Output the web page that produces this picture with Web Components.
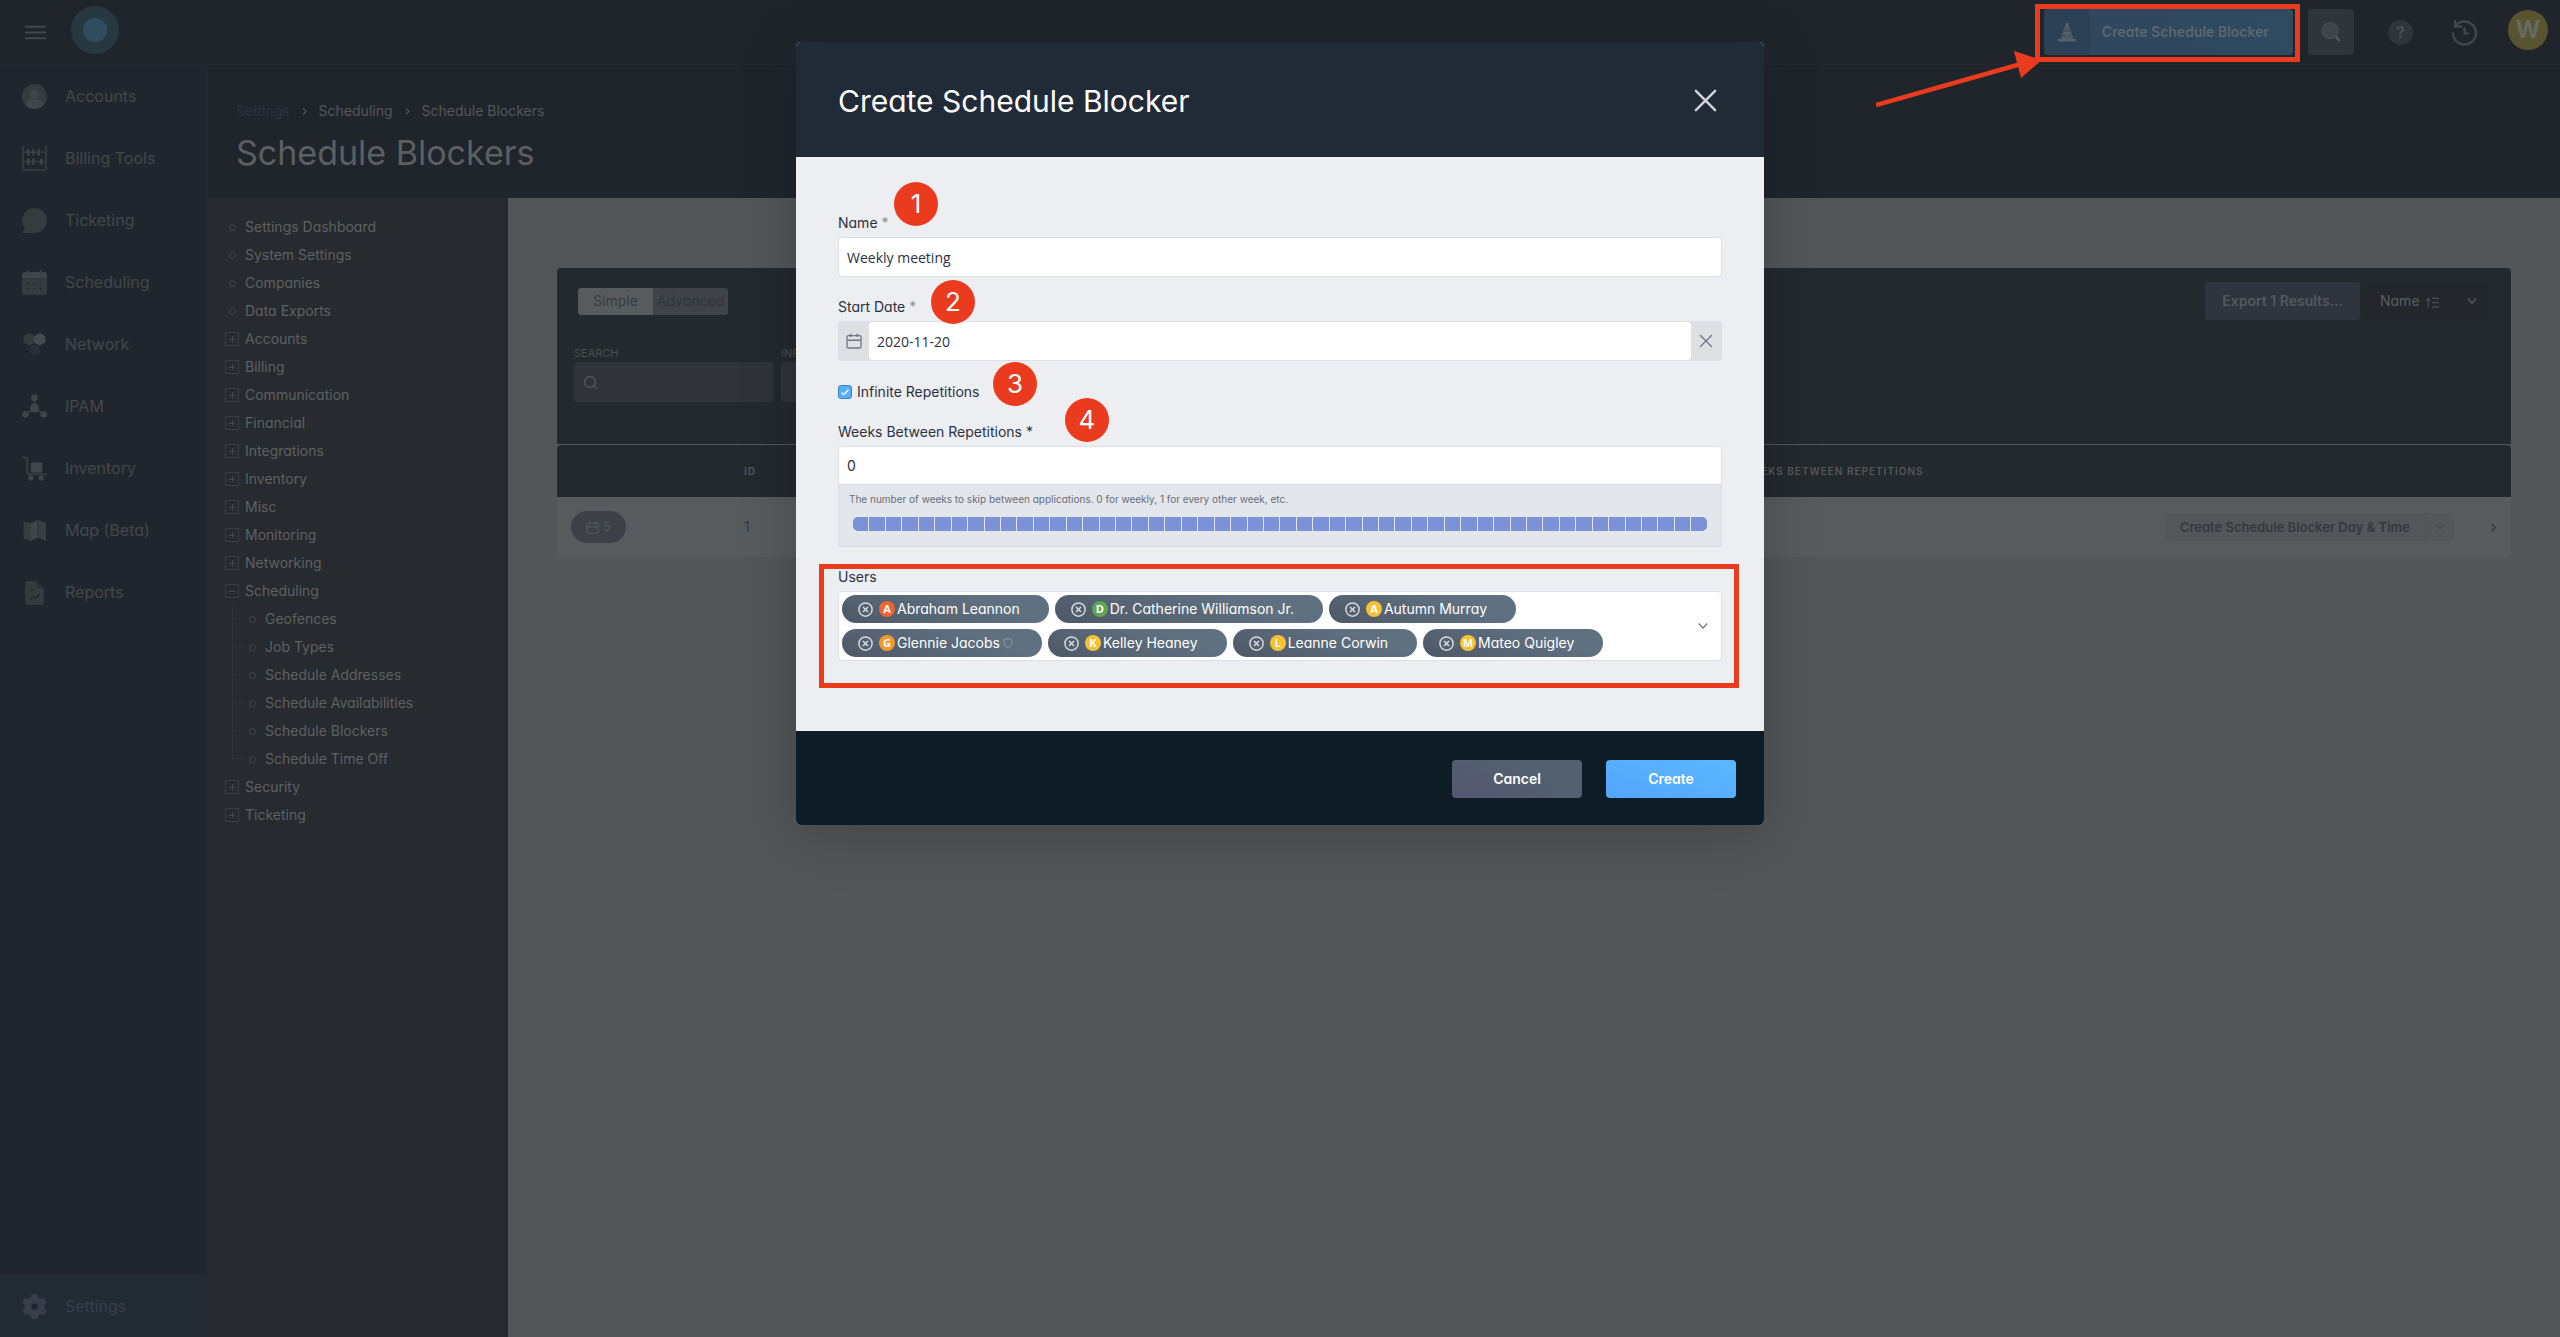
<!DOCTYPE html>
<html lang="en">
<head>
<meta charset="utf-8">
<title>Schedule Blockers</title>
<style>
  :root {
    --bar: #20252c;
    --side: #21262e;
    --tree: #272a2e;
    --page: #525659;
    --panel: #24292d;
    --row: #575b5e;
    --line: #25292f;
    --red: #eb3b1e;
    --ink: #2b3140;
    --field-border: #dcdfe5;
  }
  body {
    margin: 0;
    background: var(--page);
    font-family: Inter, "Liberation Sans", sans-serif;
    font-size: 14px;
    line-height: 20px;
    font-feature-settings: "cv11" 1;
  }
</style>
</head>
<body>
<app-shell>
  <top-bar slot="top"></top-bar>
  <side-nav slot="side"></side-nav>
  <page-header slot="header"></page-header>
  <settings-tree slot="tree"></settings-tree>
  <blocker-table slot="content"></blocker-table>
</app-shell>
<modal-dialog heading="Create Schedule Blocker">
  <blocker-form></blocker-form>
</modal-dialog>
<call-out></call-out>

<script>
const ICONS = {
  menu: '<path d="M1 6h22M1 12h22M1 18h22" stroke="currentColor" stroke-width="2.2"/>',
  accounts: '<circle cx="12" cy="12" r="12" fill="#363b3f"/><circle cx="12" cy="10" r="4.6" fill="#41464c"/><path d="M3 20c2-7 16-7 18 0-4 5.300-14 5.300-18 0z" fill="#41464c"/>',
  billing: '<path d="M1 0v21a2 2 0 0 0 2 2h18a2 2 0 0 0 2-2V0" fill="none" stroke="#34393f" stroke-width="2"/><path d="M1 6h22M1 15h22" stroke="#34393f" stroke-width="1.600"/><path d="M6 3v6M11 3v6M16 3v6M6 12v6M11 12v6M18.500 12v6" stroke="#3e4349" stroke-width="2.400"/>',
  ticketing: '<path d="M12 0a12 12 0 0 1 0 24H1c-1 0-1-1 0-1.600 1.500-1 2-2 1.600-3A12 12 0 0 1 12 0z" fill="#363b3f"/>',
  scheduling: '<path d="M0 8h24v13a3 3 0 0 1-3 3H3a3 3 0 0 1-3-3z" fill="#363b3f"/><path d="M3 2h18a3 3 0 0 1 3 3v3H0V5a3 3 0 0 1 3-3z" fill="#41464c"/><path d="M6 0v5M18 0v5" stroke="#3b4046" stroke-width="2"/><path d="M5 13h2m4 0h2m4 0h2M5 18h2m4 0h2m4 0h2" stroke="#262b30" stroke-width="1.500"/>',
  network: '<path d="M7 1l5.500 3v6L7 13l-5.500-3V4z" fill="#363b3f"/><path d="M17 1l5.500 3v6L17 13l-5.500-3V4z" fill="#464b51"/><path d="M12 11.500l5 2.800v5.800l-5 2.900-5-2.900v-5.800z" fill="#282d36"/>',
  ipam: '<path d="M12 3v10M12 14L3 19.500M12 14l9 5.500" stroke="#363b41" stroke-width="1.800"/><g fill="#40454b"><circle cx="12" cy="3.600" r="3.200"/><circle cx="12" cy="13.500" r="4.300"/><circle cx="3.300" cy="19.500" r="3.200"/><circle cx="20.700" cy="19.500" r="3.200"/></g>',
  inventory: '<path d="M0 1.500h3q2 0 2 2V15q0 2.500 2.500 2.500H24" fill="none" stroke="#363b40" stroke-width="2"/><rect x="8.500" y="6" width="11" height="10" rx="2" fill="#41464c"/><circle cx="8.500" cy="21" r="2.500" fill="#40454b"/><circle cx="18.500" cy="21" r="2.500" fill="#40454b"/>',
  map: '<path d="M1.500 3L8 5v17l-6.500-2z" fill="#363b3f"/><path d="M8 5l7-3v17l-7 3z" fill="#40454b"/><path d="M15.500 2L23 4.500V22l-7.500-3z" fill="#3a3f44"/>',
  reports: '<path d="M6 1h8l7 7v13a3 3 0 0 1-3 3H6a3 3 0 0 1-3-3V4a3 3 0 0 1 3-3z" fill="#363b3f"/><path d="M14 1l7 7h-5a2 2 0 0 1-2-2z" fill="#2a2f34"/><path d="M8 9.500h3M8 19l3-3 2 1.500 4-4" fill="none" stroke="#282d32" stroke-width="2"/>',
  gear: '<path d="M9.500 0h5l1 3 2.500 1.500 3.300-.6 2.400 4.200-2.200 2.500v2.800l2.200 2.500-2.400 4.200-3.300-.6-2.500 1.500-1 3h-5l-1-3L6 19.500l-3.300.6-2.400-4.200 2.200-2.500v-2.800L.3 8.100l2.400-4.200 3.300.6L8.500 3z" fill="#373d4b"/><circle cx="12" cy="12" r="4" fill="#303a4a"/><circle cx="12" cy="12" r="2.600" fill="#1d262c"/>',
  right: '<path d="M8 4l8 8-8 8" fill="none" stroke="currentColor" stroke-width="3"/>',
  down: '<path d="M2 6l10 11 10-11" fill="none" stroke="currentColor" stroke-width="3"/>',
  search: '<circle cx="11" cy="11" r="10" fill="none" stroke="currentColor" stroke-width="2.600"/><path d="M18 18l5 5" stroke="currentColor" stroke-width="2.600"/>',
  lens: '<circle cx="11" cy="10.500" r="9.500" fill="#40454a" stroke="#4a4e52" stroke-width="1.500"/><path d="M18 17.500l4.500 5.500" stroke="#5b5f63" stroke-width="2.400"/>',
  cone: '<path d="M10.500 1.500q1.500-2 3 0L19.500 21h-15z" fill="#52606a"/><path d="M8.600 8.500h6.800l1 3.500H7.600z" fill="#46535d"/><path d="M6.500 15h11l1.200 4H5.300z" fill="#485660"/><path d="M1 22h22" stroke="#52606a" stroke-width="3"/>',
  history: '<path d="M3.500 5.500A11 11 0 1 1 1 12" fill="none" stroke="currentColor" stroke-width="2.300"/><path d="M3 0v6.300h6.500M12 7v6h4" fill="none" stroke="currentColor" stroke-width="2.300"/>',
  calendar: '<rect x="1.500" y="4" width="21" height="18.500" rx="2" fill="none" stroke="currentColor" stroke-width="2"/><path d="M2 11h20M7 1v5M17 1v5" stroke="currentColor" stroke-width="2.200"/>',
  close: '<path d="M1 1l22 22M23 1L1 23" stroke="currentColor" stroke-width="2.800" stroke-linecap="round"/>',
  remove: '<circle cx="12" cy="12" r="10.600" fill="none" stroke="currentColor" stroke-width="2.400"/><path d="M8 8l8 8M16 8l-8 8" stroke="currentColor" stroke-width="2.600"/>',
  shield: '<path d="M12 1.500c3 1.300 6 1.500 9 1.500v9c0 6-4 9-9 11-5-2-9-5-9-11V3c3 0 6-.2 9-1.500z" fill="none" stroke="currentColor" stroke-width="2.200"/>',
  sort: '<path d="M4 23V7M0 11l4-5 4 5M11 6h13M11 14h13M11 22h13" fill="none" stroke="#484c50" stroke-width="2.400"/>'
};

const CONTROL_RESET = `
  button, input, select { font: inherit; font-feature-settings: inherit; color: inherit; margin: 0; padding: 0; border: 0; background: none; box-sizing: border-box; }
  a { color: inherit; text-decoration: none; }
`;

class BaseElement extends HTMLElement {
  constructor() {
    super();
    this.attachShadow({ mode: 'open' });
  }

  connectedCallback() {
    this.shadowRoot.innerHTML = `<style>${CONTROL_RESET}${this.styles()}</style>${this.markup()}`;
  }

  styles() { return ''; }
  markup() { return '<slot></slot>'; }
}

/* <ui-icon name="menu" size="24"> */
class UiIcon extends BaseElement {
  styles() {
    const size = this.getAttribute('size') || 24;
    return `
      :host { display: inline-flex; flex: none; width: ${size}px; height: ${size}px; }
      svg { width: 100%; height: 100%; overflow: visible; }
    `;
  }
  markup() {
    return `<svg viewBox="0 0 24 24" aria-hidden="true">${ICONS[this.getAttribute('name')]}</svg>`;
  }
}

class AppShell extends BaseElement {
  styles() {
    return `
      :host { display: grid; grid-template: auto 1fr / 208px 1fr; min-height: 100vh; }
      .top { grid-column: 1 / -1; }
      .main { display: grid; grid-template: auto 1fr / 300px 1fr; min-width: 0; }
      .header { grid-column: 1 / -1; }
      .side, .tree { display: grid; }
    `;
  }
  markup() {
    return `
      <div class="top"><slot name="top"></slot></div>
      <div class="side"><slot name="side"></slot></div>
      <div class="main">
        <div class="header"><slot name="header"></slot></div>
        <div class="tree"><slot name="tree"></slot></div>
        <main><slot name="content"></slot></main>
      </div>
    `;
  }
}

class TopBar extends BaseElement {
  styles() {
    return `
      :host { display: flex; align-items: center; justify-content: space-between; height: 65px; box-sizing: border-box;
        padding: 0 12px 0 24px; background: var(--bar); border-bottom: 1px solid var(--line); color: #42474b; }
      .left, .right { display: flex; align-items: center; }
      .left { gap: 24px; }
      .left button { display: flex; }
      .logo { display: grid; place-items: center; width: 48px; height: 48px; border-radius: 50%; background: #283841; margin-bottom: 4px; }
      .logo::before { content: ""; width: 24px; height: 24px; border-radius: 50%; background: #304c5f; }
      .create { display: flex; height: 46px; border-radius: 4px; overflow: hidden; font-weight: 600; color: #5c676f;
        background: linear-gradient(45deg, #31455c, #2e4b5f); }
      .create span { display: grid; place-items: center; }
      .create .mark { width: 46px; background: #2c4156; }
      .create .text { padding: 0 24px 0 12px; }
      .lens { display: grid; place-items: center; width: 46px; height: 46px; margin-left: 15px; border-radius: 4px; background: #30343b; }
      .help { width: 25px; height: 25px; margin-left: 34px; border-radius: 50%; background: #303539; color: #4a4e52; font-weight: 700; font-size: 16px; }
      .history { display: flex; margin-left: 39px; }
      .avatar { display: grid; place-items: center; width: 40px; height: 40px; margin-left: 31px; margin-bottom: 4px; border-radius: 50%;
        background: #58542f; color: #666a60; font-size: 24px; font-weight: 700; }
    `;
  }
  markup() {
    return `
      <div class="left">
        <button aria-label="Menu"><ui-icon name="menu" size="23"></ui-icon></button>
        <a class="logo" href="#" aria-label="Home"></a>
      </div>
      <div class="right">
        <button class="create">
          <span class="mark"><ui-icon name="cone" size="20"></ui-icon></span>
          <span class="text">Create Schedule Blocker</span>
        </button>
        <button class="lens" aria-label="Search"><ui-icon name="lens" size="20"></ui-icon></button>
        <button class="help">?</button>
        <button class="history" aria-label="History"><ui-icon name="history" size="25"></ui-icon></button>
        <span class="avatar">W</span>
      </div>
    `;
  }
}

class SideNav extends BaseElement {
  styles() {
    return `
      :host { display: block; background: var(--side); border-right: 1px solid var(--line); color: #42474a; }
      nav { display: flex; flex-direction: column; height: 100%; }
      a { display: flex; align-items: center; gap: 18px; height: 62px; padding: 0 22px; font-size: 16px; }
      .active { margin-top: auto; background: #222b32; color: #373e50; }
    `;
  }
  markup() {
    const items = [
      ['accounts', 'Accounts'], ['billing', 'Billing Tools'], ['ticketing', 'Ticketing'],
      ['scheduling', 'Scheduling'], ['network', 'Network'], ['ipam', 'IPAM'],
      ['inventory', 'Inventory'], ['map', 'Map (Beta)'], ['reports', 'Reports']
    ];
    return `
      <nav>
        ${items.map(([icon, text]) => `<a href="#"><ui-icon name="${icon}" size="25"></ui-icon>${text}</a>`).join('')}
        <a href="#" class="active"><ui-icon name="gear" size="25"></ui-icon>Settings</a>
      </nav>
    `;
  }
}

class PageHeader extends BaseElement {
  styles() {
    return `
      :host { display: block; padding: 36px 28px 23px; background: var(--bar); color: #5b5f62; }
      nav { display: flex; align-items: center; gap: 10px; color: #53575a; }
      nav a:first-child { color: #2d3241; }
      h1 { margin: 10px 0 0; font-size: 34px; line-height: 44px; font-weight: 400; }
    `;
  }
  markup() {
    return `
      <nav>
        <a href="#">Settings</a><ui-icon name="right" size="9"></ui-icon>
        <a href="#">Scheduling</a><ui-icon name="right" size="9"></ui-icon>
        <a href="#">Schedule Blockers</a>
      </nav>
      <h1>Schedule Blockers</h1>
    `;
  }
}

class SettingsTree extends BaseElement {
  styles() {
    return `
      :host { display: block; padding-top: 15px; background: var(--tree); color: #5e6164; }
      ul { list-style: none; margin: 0; padding: 0 0 0 17px; }
      a { display: flex; align-items: center; gap: 6px; height: 28px; }
      i { position: relative; display: grid; place-items: center; width: 14px; height: 14px; flex: none; box-sizing: border-box; }
      i.leaf::before { content: ""; width: 5px; height: 5px; border: 1px solid #43474a; border-radius: 50%; }
      i.box { border: 1px solid #3b3f43; }
      i.box::before { content: ""; width: 6px; height: 1px; background: #45494d; }
      i.plus::after { content: ""; position: absolute; width: 1px; height: 6px; background: #45494d; }
      ul ul { padding: 0; margin-left: 7px; }
      ul ul li { padding-left: 13px; background: linear-gradient(#303438, #303438) 0 13px / 10px 1px no-repeat,
        linear-gradient(#303438, #303438) 0 0 / 1px 100% no-repeat; }
      ul ul li:last-child { background-size: 10px 1px, 1px 14px; }
    `;
  }
  leaf(text) { return `<li><a href="#"><i class="leaf"></i>${text}</a></li>`; }
  branch(text) { return `<li><a href="#"><i class="box plus"></i>${text}</a></li>`; }
  markup() {
    const leaves = ['Settings Dashboard', 'System Settings', 'Companies', 'Data Exports'];
    const branches = ['Accounts', 'Billing', 'Communication', 'Financial', 'Integrations', 'Inventory', 'Misc', 'Monitoring', 'Networking'];
    const children = ['Geofences', 'Job Types', 'Schedule Addresses', 'Schedule Availabilities', 'Schedule Blockers', 'Schedule Time Off'];
    return `
      <ul>
        ${leaves.map(this.leaf).join('')}
        ${branches.map(this.branch).join('')}
        <li><a href="#"><i class="box"></i>Scheduling</a><ul>${children.map(this.leaf).join('')}</ul></li>
        ${['Security', 'Ticketing'].map(this.branch).join('')}
      </ul>
    `;
  }
}

class BlockerTable extends BaseElement {
  styles() {
    return `
      :host { display: block; padding: 70px 49px 0; color: #35393d; }
      .filters { height: 176px; box-sizing: border-box; padding: 14px 20px 0 17px; margin-bottom: 1px; background: var(--panel); border-radius: 4px 4px 0 0; }
      .tools { display: flex; justify-content: space-between; align-items: center; height: 38px; padding-left: 4px; }
      .toggle { display: grid; grid-template-columns: 75px 75px; height: 27px; border-radius: 3px; overflow: hidden; }
      .toggle button { background: #404449; color: #303439; }
      .toggle .on { background: #575b5e; color: #393d41; }
      .actions { display: flex; gap: 4px; }
      .export { height: 38px; padding: 0 17px; border-radius: 4px; background: #30343f; color: #54585c; font-weight: 600; }
      .order { display: flex; align-items: center; width: 127px; height: 38px; box-sizing: border-box; padding: 0 14px 0 16px; border-radius: 4px; background: #23262b; color: #5a5e61; }
      .order select { appearance: none; width: 46px; height: 38px; }
      .order ui-icon:last-child { margin-left: auto; }
      .fields { display: flex; gap: 7px; margin-top: 26px; }
      label { display: grid; gap: 2px; width: 200px; font-size: 11px; line-height: 14px; color: #4a4e52; text-transform: uppercase; }
      .box { display: flex; align-items: center; gap: 8px; height: 40px; padding: 0 10px; border-radius: 4px; background: #303438; box-sizing: border-box; color: #53575a; }
      .box input { width: 100%; }
      table { width: 100%; border-collapse: collapse; table-layout: fixed; background: var(--row); border-radius: 4px; overflow: hidden; }
      th { height: 52px; padding: 0; background: var(--panel); color: #54585b; font-size: 10px; font-weight: 600; text-align: left; letter-spacing: 1px; }
      td { height: 60px; padding: 0; }
      .pill { display: inline-flex; align-items: center; justify-content: center; gap: 4px; width: 55px; height: 32px; margin-left: 14px; border-radius: 16px;
        background: #3e4048; color: #54585c; font-size: 12px; vertical-align: middle; }
      .end { display: flex; justify-content: flex-end; align-items: center; padding-right: 12px; }
      .split { display: flex; height: 28px; margin-right: 34px; border-radius: 4px; background: #54565a; font-weight: 600; font-size: 13px; }
      .split button:first-child { padding: 0 14px; border-right: 1px solid #505356; }
      .split button:last-child { display: grid; place-items: center; width: 29px; }
      .go { display: flex; }
    `;
  }
  markup() {
    return `
      <div class="filters">
        <div class="tools">
          <div class="toggle"><button class="on">Simple</button><button>Advanced</button></div>
          <div class="actions">
            <button class="export">Export 1 Results...</button>
            <div class="order">
              <select aria-label="Order by"><option>Name</option></select>
              <ui-icon name="sort" size="13"></ui-icon>
              <ui-icon name="down" size="10"></ui-icon>
            </div>
          </div>
        </div>
        <div class="fields">
          <label>Search<span class="box"><ui-icon name="search" size="13"></ui-icon><input type="text"></span></label>
          <label>Infinite<span class="box"><input type="text"></span></label>
        </div>
      </div>
      <table>
        <colgroup><col style="width:187px"><col style="width:120px"><col><col style="width:400px"><col style="width:368px"></colgroup>
        <thead><tr><th></th><th>ID</th><th></th><th>WEEKS BETWEEN REPETITIONS</th><th></th></tr></thead>
        <tbody><tr>
          <td><button class="pill"><ui-icon name="calendar" size="13"></ui-icon>5</button></td>
          <td>1</td><td></td><td></td>
          <td><div class="end">
            <div class="split"><button>Create Schedule Blocker Day &amp; Time</button><button aria-label="More actions"><ui-icon name="down" size="8"></ui-icon></button></div>
            <button class="go" aria-label="Open"><ui-icon name="right" size="11"></ui-icon></button>
          </div></td>
        </tr></tbody>
      </table>
    `;
  }
}

class ModalDialog extends BaseElement {
  styles() {
    return `
      :host { position: absolute; top: 42px; left: 0; right: 0; display: block; width: 968px; margin: 0 auto; border-radius: 5px;
        background: #edeef2; color: var(--ink); box-shadow: 0 8px 60px rgba(0, 0, 0, 0.2); }
      header { display: flex; align-items: center; justify-content: space-between; height: 115px; box-sizing: border-box; padding: 2px 48px 0 42px;
        border-radius: 5px 5px 0 0; background: #212b38; color: #fff; }
      h2 { margin: 0; font-size: 30px; line-height: 40px; font-weight: 400; }
      header button { display: flex; color: #d3d5d8; }
      footer { display: flex; align-items: center; justify-content: flex-end; gap: 24px; height: 94px; box-sizing: border-box; padding: 2px 28px 0;
        border-radius: 0 0 5px 5px; background: #0e1c28; }
      footer button { width: 130px; height: 38px; border-radius: 4px; color: #fff; font-weight: 600; }
      .cancel { background: linear-gradient(20deg, #555670, #53606f 60%); }
      .create { background: linear-gradient(20deg, #55a5fb, #5bb8fd); }
    `;
  }
  markup() {
    return `
      <header>
        <h2>${this.getAttribute('heading')}</h2>
        <button aria-label="Close"><ui-icon name="close" size="21"></ui-icon></button>
      </header>
      <slot></slot>
      <footer><button class="cancel">Cancel</button><button class="create">Create</button></footer>
    `;
  }
}

/* <user-tag initial="A" color="#f0653a" guarded>Name</user-tag> */
class UserTag extends BaseElement {
  styles() {
    return `
      :host { display: inline-flex; align-items: center; height: 28px; box-sizing: border-box; padding: 0 29px 0 16px; border-radius: 14px;
        background: linear-gradient(20deg, #4e5867, #5f7080 70%); color: #fff; }
      button { display: flex; margin-right: 6px; color: #d5d9de; }
      b { display: grid; place-items: center; width: 16px; height: 16px; margin-right: 2px; border-radius: 50%; background: ${this.getAttribute('color')};
        font: 700 11px/16px "Open Sans", sans-serif; }
      .shield { margin-left: 3px; color: #929da9; }
    `;
  }
  markup() {
    return `
      <button aria-label="Remove"><ui-icon name="remove" size="15"></ui-icon></button>
      <b>${this.getAttribute('initial')}</b><slot></slot>
      ${this.hasAttribute('guarded') ? '<ui-icon class="shield" name="shield" size="10"></ui-icon>' : ''}
    `;
  }
}

class BlockerForm extends BaseElement {
  styles() {
    return `
      :host { position: relative; display: block; padding: 56px 42px 70px; }
      form { display: grid; gap: 20px; }
      .field { display: grid; gap: 4px; }
      label small { color: #8b909a; font-size: 14px; }
      input[type=text] { width: 100%; height: 40px; padding: 0 8px; border: 1px solid var(--field-border); border-radius: 4px; background: #fff;
        font-family: "Open Sans", sans-serif; color: var(--ink); }
      .date { display: flex; height: 40px; box-sizing: border-box; border: 1px solid var(--field-border); border-radius: 4px; background: #dfe0e4; color: #707784; }
      .date input[type=text] { height: 38px; border: 0; }
      .date span, .date button { display: grid; place-items: center; width: 30px; flex: none; }
      .check { display: flex; align-items: center; gap: 5px; height: 21px; }
      .check input { appearance: none; width: 14px; height: 14px; border: 1px solid #3f83c1; border-radius: 3px;
        background: #56aefc url("data:image/svg+xml,%3Csvg xmlns='http://www.w3.org/2000/svg' viewBox='0 0 12 12'%3E%3Cpath d='M2.500 6.500l2.300 2.200 4.700-5' fill='none' stroke='white' stroke-width='1.300'/%3E%3C/svg%3E"); }
      .weeks input[type=text] { display: block; height: 39px; border-radius: 4px 4px 0 0; font-family: inherit; }
      .hint { height: 62px; box-sizing: border-box; padding: 4px 14px 0; border: 1px solid #d6d9df; border-top: 0; border-radius: 0 0 4px 4px; background: #e3e6eb; }
      .hint p { margin: 0 -4px 8px; font-size: 10px; color: #666d7a; }
      .bars { display: flex; gap: 1px; height: 14px; border-radius: 5px; overflow: hidden; }
      .bars i { flex: 1; background: #7a91d8; }
      .users { display: flex; align-items: center; border: 1px solid var(--field-border); border-radius: 4px; background: #fff; padding: 3px; }
      .tags { display: flex; flex-wrap: wrap; gap: 6px; flex: 1; padding-right: 60px; }
      .users > button { display: flex; margin-right: 10px; color: #6a7280; }
      .badge { position: absolute; display: grid; place-items: center; width: 44px; height: 44px; border-radius: 50%; background: var(--red); color: #fff; font-size: 26px; }
      .frame { position: absolute; left: 23px; right: 25px; top: 407px; bottom: 43px; border: 5px solid var(--red); pointer-events: none; }
    `;
  }
  markup() {
    const people = [
      ['A', '#ee6530', 'Abraham Leannon'], ['D', '#5fa653', 'Dr. Catherine Williamson Jr.'], ['A', '#f6c132', 'Autumn Murray'],
      ['G', '#f29a2e', 'Glennie Jacobs', 'guarded'], ['K', '#f6c132', 'Kelley Heaney'], ['L', '#f6c132', 'Leanne Corwin'], ['M', '#f6c132', 'Mateo Quigley']
    ];
    const badges = [[98, 25], [135, 123], [197, 205], [269, 241]];
    return `
      <form>
        <div class="field"><label for="name">Name <small>*</small></label><input id="name" type="text" value="Weekly meeting"></div>
        <div class="field">
          <label for="start">Start Date <small>*</small></label>
          <div class="date">
            <span><ui-icon name="calendar" size="16"></ui-icon></span>
            <input id="start" type="text" value="2020-11-20">
            <button type="button" aria-label="Clear date"><ui-icon name="close" size="12"></ui-icon></button>
          </div>
        </div>
        <label class="check"><input type="checkbox" checked>Infinite Repetitions</label>
        <div class="field">
          <label for="weeks">Weeks Between Repetitions *</label>
          <div class="weeks">
            <input id="weeks" type="text" value="0">
            <div class="hint">
              <p>The number of weeks to skip between applications. 0 for weekly, 1 for every other week, etc.</p>
              <div class="bars">${'<i></i>'.repeat(52)}</div>
            </div>
          </div>
        </div>
        <div class="field">
          <label id="users">Users</label>
          <div class="users" role="group" aria-labelledby="users">
            <div class="tags">${people.map(([i, c, n, g]) => `<user-tag initial="${i}" color="${c}" ${g || ''}>${n}</user-tag>`).join('')}</div>
            <button type="button" aria-label="Show users"><ui-icon name="down" size="10"></ui-icon></button>
          </div>
        </div>
      </form>
      ${badges.map(([x, y], n) => `<span class="badge" style="left:${x}px;top:${y}px">${n + 1}</span>`).join('')}
      <div class="frame"></div>
    `;
  }
}

/* Frame and arrow drawn over the create button in the top bar */
class CallOut extends BaseElement {
  styles() {
    return `
      :host { position: absolute; top: 4px; right: 260px; width: 424px; height: 106px; pointer-events: none; }
      svg { display: block; width: 100%; height: 100%; }
    `;
  }
  markup() {
    return `
      <svg viewBox="0 0 424 106">
        <rect x="161.500" y="2.500" width="260" height="53" fill="none" stroke="#eb3b1e" stroke-width="5"/>
        <path d="M0 101L145 60" stroke="#eb3b1e" stroke-width="4.500"/>
        <path d="M138 47L166 56 145 74z" fill="#eb3b1e"/>
      </svg>
    `;
  }
}

customElements.define('ui-icon', UiIcon);
customElements.define('app-shell', AppShell);
customElements.define('top-bar', TopBar);
customElements.define('side-nav', SideNav);
customElements.define('page-header', PageHeader);
customElements.define('settings-tree', SettingsTree);
customElements.define('blocker-table', BlockerTable);
customElements.define('modal-dialog', ModalDialog);
customElements.define('user-tag', UserTag);
customElements.define('blocker-form', BlockerForm);
customElements.define('call-out', CallOut);
</script>
</body>
</html>
